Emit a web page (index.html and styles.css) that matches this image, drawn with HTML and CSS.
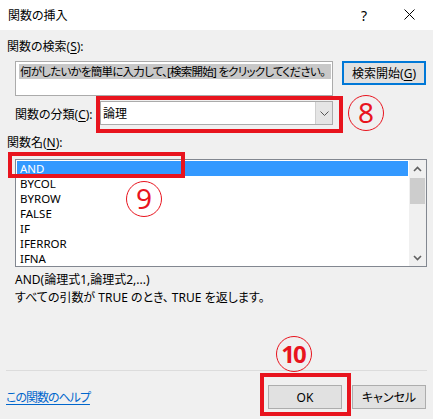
FILE: index.html
```html
<!DOCTYPE html>
<html lang="ja">
<head>
    <meta charset="UTF-8">
    <meta name="viewport" content="width=device-width, initial-scale=1.0">
    <title>関数の挿入</title>
    <link rel="stylesheet" href="styles.css">
</head>
<body>
    <div class="dialog">
        <div class="titlebar">
            <span class="title">関数の挿入</span>
            <span class="help-btn">?</span>
            <span class="close-btn">
                <svg width="11" height="11" viewBox="0 0 11 11"><path d="M0.5 0.5 L10.5 10.5 M10.5 0.5 L0.5 10.5" stroke="#000" stroke-width="1" fill="none"/></svg>
            </span>
        </div>

        <div class="label search-label">関数の検索(<u>S</u>):</div>
        <div class="search-row">
            <div class="search-box">
                <span class="search-text">何がしたいかを簡単に入力して、[検索開始] をクリックしてください。</span>
            </div>
            <button class="btn btn-default">検索開始(<u>G</u>)</button>
        </div>

        <div class="category-row">
            <span class="label category-label">関数の分類(<u>C</u>):</span>
            <div class="combo">
                <span class="combo-value">論理</span>
                <span class="combo-arrow">
                    <svg width="9" height="5" viewBox="0 0 9 5"><path d="M0.5 0.5 L4.5 4.5 L8.5 0.5" stroke="#555" stroke-width="1" fill="none"/></svg>
                </span>
            </div>
        </div>

        <div class="label list-label">関数名(<u>N</u>):</div>
        <div class="listbox">
            <ul class="list">
                <li class="selected">AND</li>
                <li>BYCOL</li>
                <li>BYROW</li>
                <li>FALSE</li>
                <li>IF</li>
                <li>IFERROR</li>
                <li>IFNA</li>
            </ul>
            <div class="scrollbar">
                <span class="arrow">
                    <svg width="9" height="6" viewBox="0 0 9 6"><path d="M1 5 L4.5 1.5 L8 5" stroke="#606060" stroke-width="1.6" fill="none"/></svg>
                </span>
                <div class="track"><div class="thumb"></div></div>
                <span class="arrow">
                    <svg width="9" height="6" viewBox="0 0 9 6"><path d="M1 1 L4.5 4.5 L8 1" stroke="#606060" stroke-width="1.6" fill="none"/></svg>
                </span>
            </div>
        </div>

        <div class="desc">
            <div>AND(論理式1,論理式2,...)</div>
            <div>すべての引数が TRUE のとき、 TRUE を返します。</div>
        </div>

        <div class="footer">
            <a class="help-link" href="#">この関数のヘルプ</a>
            <div class="buttons">
                <button class="btn">OK</button>
                <button class="btn">キャンセル</button>
            </div>
        </div>

        <!-- annotations -->
        <div class="mark box-8"></div>
        <div class="mark box-9"></div>
        <div class="mark box-10"></div>
        <div class="num num-8">8</div>
        <div class="num num-9">9</div>
        <div class="num num-10">10</div>
    </div>
</body>
</html>
```

FILE: styles.css
```css
body {
    margin: 0;
    padding: 0;
    font-family: "Noto Sans", "Noto Sans CJK JP", sans-serif;
    font-size: 12px;
    font-feature-settings: "palt";
    color: #000;
    background-color: #f0f0f0;
}
u {
    text-decoration-thickness: 1px;
    text-underline-offset: 2px;
}
.dialog {
    position: relative;
    width: 433px;
    height: 419px;
    display: flex;
    flex-direction: column;
    background-color: #f0f0f0;
    overflow: hidden;
}
.titlebar {
    height: 30px;
    background-color: #fff;
    display: flex;
    align-items: center;
    padding-left: 8px;
}
.title {
    flex: 1;
    font-size: 12px;
}
.help-btn {
    width: 12px;
    margin-right: 34px;
    font-size: 14px;
    text-align: center;
}
.close-btn {
    display: flex;
    margin-right: 18px;
    margin-top: -2px;
}
.label {
    line-height: 16px;
    white-space: nowrap;
}
.search-label {
    margin: 9px 0 0 7px;
}
.search-row {
    display: flex;
    margin: 6px 0 0 15px;
}
.search-box {
    box-sizing: border-box;
    width: 318px;
    height: 35px;
    border: 1px solid #ababab;
    background-color: #fff;
    padding: 2px 0 0 3px;
}
.search-text {
    display: block;
    width: 312px;
    line-height: 15px;
    font-size: 11.5px;
    letter-spacing: -0.75px;
    background-color: #c8c8c8;
    white-space: nowrap;
    overflow: hidden;
    padding-left: 1px;
    box-sizing: border-box;
}
.btn {
    box-sizing: border-box;
    width: 74px;
    height: 24px;
    border: 1px solid #adadad;
    background-color: #e1e1e1;
    font-family: inherit;
    font-size: 12px;
    font-feature-settings: "palt";
    color: #000;
    padding: 0;
}
.btn-default {
    width: 84px;
    margin-left: 9px;
    border: 2px solid #0078d7;
}
.category-row {
    display: flex;
    align-items: center;
    margin: 5px 0 0 15px;
}
.category-label {
    width: 85px;
    margin-top: 4px;
}
.combo {
    box-sizing: border-box;
    width: 233px;
    height: 24px;
    border: 1px solid #ababab;
    background-color: #fff;
    display: flex;
    align-items: center;
}
.combo-value {
    flex: 1;
    padding-left: 2px;
}
.combo-arrow {
    box-sizing: border-box;
    width: 17px;
    height: 22px;
    border-left: 1px solid #cfcfcf;
    background-color: #e5e5e5;
    display: flex;
    align-items: center;
    justify-content: center;
}
.list-label {
    margin: 10px 0 0 7px;
}
.listbox {
    box-sizing: border-box;
    width: 412px;
    height: 108px;
    margin: 8px 0 0 15px;
    border: 1px solid #828790;
    background-color: #fff;
    display: flex;
    padding: 1px 0 1px 1px;
}
.list {
    flex: 1;
    list-style: none;
    margin: 0;
    padding: 0;
}
.list li {
    height: 15px;
    line-height: 15px;
    padding-left: 3px;
    font-size: 11.5px;
}
.list li.selected {
    background-color: #3399ff;
    color: #fff;
    margin-right: 1px;
}
.scrollbar {
    width: 17px;
    background-color: #f0f0f0;
    display: flex;
    flex-direction: column;
    margin: -1px 0;
}
.scrollbar .arrow {
    height: 17px;
    display: flex;
    align-items: center;
    justify-content: center;
}
.track {
    flex: 1;
    padding-top: 1px;
}
.thumb {
    width: 15px;
    height: 26px;
    margin-left: 1px;
    background-color: #cdcdcd;
}
.desc {
    margin: 4px 0 0 15px;
    line-height: 18px;
}
.footer {
    margin: auto 6px 0 6px;
    border-top: 1px solid #dcdcdc;
    padding: 14px 1px 10px 0;
    display: flex;
    align-items: center;
    justify-content: space-between;
}
.help-link {
    color: #0066cc;
    text-decoration: underline;
    text-underline-offset: 2px;
    letter-spacing: -1px;
}
.buttons {
    display: flex;
    gap: 10px;
}
.mark {
    position: absolute;
    box-sizing: border-box;
    border: 4px solid #e8141e;
}
.box-8 {
    left: 96px;
    top: 96px;
    width: 247px;
    height: 37px;
}
.box-9 {
    left: 8px;
    top: 152px;
    width: 177px;
    height: 26px;
}
.box-10 {
    left: 260px;
    top: 373px;
    width: 91px;
    height: 43px;
}
.num {
    position: absolute;
    box-sizing: border-box;
    width: 36px;
    height: 36px;
    border: 1.5px solid #e8141e;
    border-radius: 50%;
    color: #e8141e;
    font-family: "Noto Sans", sans-serif;
    font-size: 28px;
    line-height: 33px;
    text-align: center;
}
.num-8 {
    left: 348px;
    top: 95px;
}
.num-9 {
    left: 126px;
    top: 181px;
}
.num-10 {
    left: 276px;
    top: 336px;
    font-size: 24px;
    font-weight: bold;
    letter-spacing: -2px;
    text-indent: -2px;
}
```
